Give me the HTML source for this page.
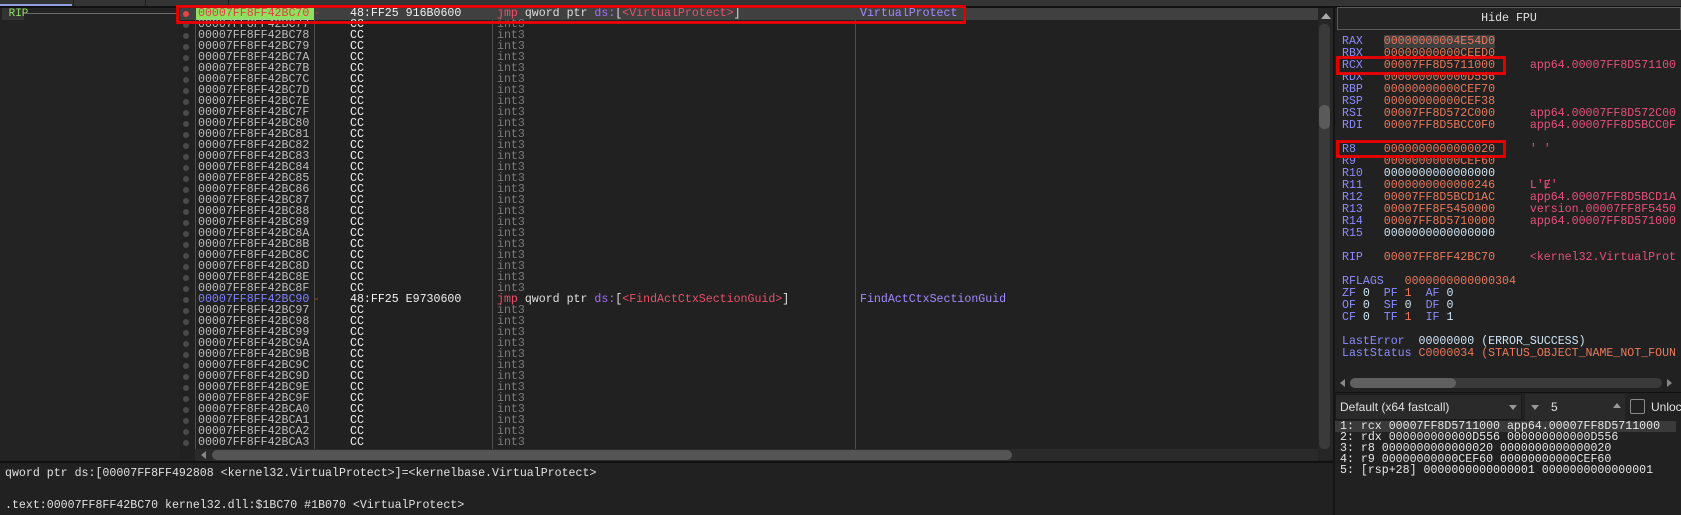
<!DOCTYPE html>
<html><head><meta charset="utf-8">
<style>
*{margin:0;padding:0;box-sizing:border-box}
body{width:1681px;height:515px;background:#212121;overflow:hidden;position:relative;font-family:"Liberation Mono",monospace;font-size:11.6px;color:#ddd}
.a{position:absolute;white-space:pre}
.r{position:absolute;left:0;width:1318px;height:11px;line-height:11px}
.r span{position:absolute;white-space:pre}
.dot{left:183px;top:3px;width:6px;height:6px;border-radius:3px;background:#4a4a4a}
.ad{left:198px;color:#bdbdbd}
.by{left:350px;color:#f0f0f0}
.ds{left:497px;color:#7a7a7a}
.vl{position:absolute;width:1px;background:#4e4e4e}
.rg{position:absolute;left:1342px;white-space:pre;line-height:12px;height:12px}
.n{color:#8c8cff}.v{color:#e9795c}.z{color:#cfe3f2}.c{color:#e8507c}
</style></head><body>
<!-- top tab bar -->
<div class="a" style="left:0;top:0;width:1681px;height:6px;background:#343434"></div>
<div class="a" style="left:0;top:4px;width:72px;height:2px;background:#8fa0e0"></div>
<div class="a" style="left:73px;top:0;width:1px;height:6px;background:#1a1a1a"></div>
<div class="a" style="left:145px;top:0;width:1px;height:6px;background:#1a1a1a"></div>
<div class="a" style="left:228px;top:0;width:1px;height:6px;background:#1a1a1a"></div>
<div class="a" style="left:0;top:6px;width:1681px;height:2px;background:#111"></div>
<!-- left label panel -->
<div class="a" style="left:0;top:8px;width:180px;height:452px;background:#232323"></div>
<div class="a" style="left:2px;top:8px;width:22px;height:12px;background:#343434;color:#8ee060;line-height:12px;font-size:11px"> RIP</div>
<div class="a" style="left:24px;top:13px;width:154px;height:1px;background:#6a6a6a"></div>
<!-- column separators -->
<div class="vl" style="left:195px;top:8px;height:447px"></div>
<div class="vl" style="left:314px;top:8px;height:447px"></div>
<div class="vl" style="left:492px;top:8px;height:447px"></div>
<div class="vl" style="left:855px;top:8px;height:447px"></div>
<!-- selected row -->
<div class="a" style="left:180px;top:8px;width:1138px;height:12px;background:#404040"></div>
<div class="a" style="left:196px;top:8px;width:118px;height:12px;background:#8ee060"></div>
<div id="rows"></div>
<div class="r" style="top:8px"><span class="dot" style="background:#e04848"></span><span class="ad" style="color:#e04040">00007FF8FF42BC70</span><span style="left:313px;color:#d03030">-</span><span class="by">48:FF25 916B0600</span><span style="left:497px"><span style="position:static;color:#e8506a">jmp</span> qword ptr <span style="position:static;color:#a070ff">ds:</span>[<span style="position:static;color:#e8506a">&lt;VirtualProtect&gt;</span>]</span><span style="left:860px;color:#a488ff">VirtualProtect</span></div>
<div class="r" style="top:19px"><span class="dot"></span><span class="ad">00007FF8FF42BC77</span><span class="by">CC</span><span class="ds">int3</span></div>
<div class="r" style="top:30px"><span class="dot"></span><span class="ad">00007FF8FF42BC78</span><span class="by">CC</span><span class="ds">int3</span></div>
<div class="r" style="top:41px"><span class="dot"></span><span class="ad">00007FF8FF42BC79</span><span class="by">CC</span><span class="ds">int3</span></div>
<div class="r" style="top:52px"><span class="dot"></span><span class="ad">00007FF8FF42BC7A</span><span class="by">CC</span><span class="ds">int3</span></div>
<div class="r" style="top:63px"><span class="dot"></span><span class="ad">00007FF8FF42BC7B</span><span class="by">CC</span><span class="ds">int3</span></div>
<div class="r" style="top:74px"><span class="dot"></span><span class="ad">00007FF8FF42BC7C</span><span class="by">CC</span><span class="ds">int3</span></div>
<div class="r" style="top:85px"><span class="dot"></span><span class="ad">00007FF8FF42BC7D</span><span class="by">CC</span><span class="ds">int3</span></div>
<div class="r" style="top:96px"><span class="dot"></span><span class="ad">00007FF8FF42BC7E</span><span class="by">CC</span><span class="ds">int3</span></div>
<div class="r" style="top:107px"><span class="dot"></span><span class="ad">00007FF8FF42BC7F</span><span class="by">CC</span><span class="ds">int3</span></div>
<div class="r" style="top:118px"><span class="dot"></span><span class="ad">00007FF8FF42BC80</span><span class="by">CC</span><span class="ds">int3</span></div>
<div class="r" style="top:129px"><span class="dot"></span><span class="ad">00007FF8FF42BC81</span><span class="by">CC</span><span class="ds">int3</span></div>
<div class="r" style="top:140px"><span class="dot"></span><span class="ad">00007FF8FF42BC82</span><span class="by">CC</span><span class="ds">int3</span></div>
<div class="r" style="top:151px"><span class="dot"></span><span class="ad">00007FF8FF42BC83</span><span class="by">CC</span><span class="ds">int3</span></div>
<div class="r" style="top:162px"><span class="dot"></span><span class="ad">00007FF8FF42BC84</span><span class="by">CC</span><span class="ds">int3</span></div>
<div class="r" style="top:173px"><span class="dot"></span><span class="ad">00007FF8FF42BC85</span><span class="by">CC</span><span class="ds">int3</span></div>
<div class="r" style="top:184px"><span class="dot"></span><span class="ad">00007FF8FF42BC86</span><span class="by">CC</span><span class="ds">int3</span></div>
<div class="r" style="top:195px"><span class="dot"></span><span class="ad">00007FF8FF42BC87</span><span class="by">CC</span><span class="ds">int3</span></div>
<div class="r" style="top:206px"><span class="dot"></span><span class="ad">00007FF8FF42BC88</span><span class="by">CC</span><span class="ds">int3</span></div>
<div class="r" style="top:217px"><span class="dot"></span><span class="ad">00007FF8FF42BC89</span><span class="by">CC</span><span class="ds">int3</span></div>
<div class="r" style="top:228px"><span class="dot"></span><span class="ad">00007FF8FF42BC8A</span><span class="by">CC</span><span class="ds">int3</span></div>
<div class="r" style="top:239px"><span class="dot"></span><span class="ad">00007FF8FF42BC8B</span><span class="by">CC</span><span class="ds">int3</span></div>
<div class="r" style="top:250px"><span class="dot"></span><span class="ad">00007FF8FF42BC8C</span><span class="by">CC</span><span class="ds">int3</span></div>
<div class="r" style="top:261px"><span class="dot"></span><span class="ad">00007FF8FF42BC8D</span><span class="by">CC</span><span class="ds">int3</span></div>
<div class="r" style="top:272px"><span class="dot"></span><span class="ad">00007FF8FF42BC8E</span><span class="by">CC</span><span class="ds">int3</span></div>
<div class="r" style="top:283px"><span class="dot"></span><span class="ad">00007FF8FF42BC8F</span><span class="by">CC</span><span class="ds">int3</span></div>
<div class="r" style="top:294px"><span class="dot"></span><span class="ad" style="color:#8080ff">00007FF8FF42BC90</span><span style="left:313px;color:#d03030">-</span><span class="by">48:FF25 E9730600</span><span style="left:497px;color:#e0e0e0"><span style="position:static;color:#e8506a">jmp</span> qword ptr <span style="position:static;color:#a070ff">ds:</span>[<span style="position:static;color:#e8506a">&lt;FindActCtxSectionGuid&gt;</span>]</span><span style="left:860px;color:#a488ff">FindActCtxSectionGuid</span></div>
<div class="r" style="top:305px"><span class="dot"></span><span class="ad">00007FF8FF42BC97</span><span class="by">CC</span><span class="ds">int3</span></div>
<div class="r" style="top:316px"><span class="dot"></span><span class="ad">00007FF8FF42BC98</span><span class="by">CC</span><span class="ds">int3</span></div>
<div class="r" style="top:327px"><span class="dot"></span><span class="ad">00007FF8FF42BC99</span><span class="by">CC</span><span class="ds">int3</span></div>
<div class="r" style="top:338px"><span class="dot"></span><span class="ad">00007FF8FF42BC9A</span><span class="by">CC</span><span class="ds">int3</span></div>
<div class="r" style="top:349px"><span class="dot"></span><span class="ad">00007FF8FF42BC9B</span><span class="by">CC</span><span class="ds">int3</span></div>
<div class="r" style="top:360px"><span class="dot"></span><span class="ad">00007FF8FF42BC9C</span><span class="by">CC</span><span class="ds">int3</span></div>
<div class="r" style="top:371px"><span class="dot"></span><span class="ad">00007FF8FF42BC9D</span><span class="by">CC</span><span class="ds">int3</span></div>
<div class="r" style="top:382px"><span class="dot"></span><span class="ad">00007FF8FF42BC9E</span><span class="by">CC</span><span class="ds">int3</span></div>
<div class="r" style="top:393px"><span class="dot"></span><span class="ad">00007FF8FF42BC9F</span><span class="by">CC</span><span class="ds">int3</span></div>
<div class="r" style="top:404px"><span class="dot"></span><span class="ad">00007FF8FF42BCA0</span><span class="by">CC</span><span class="ds">int3</span></div>
<div class="r" style="top:415px"><span class="dot"></span><span class="ad">00007FF8FF42BCA1</span><span class="by">CC</span><span class="ds">int3</span></div>
<div class="r" style="top:426px"><span class="dot"></span><span class="ad">00007FF8FF42BCA2</span><span class="by">CC</span><span class="ds">int3</span></div>
<div class="r" style="top:437px"><span class="dot"></span><span class="ad">00007FF8FF42BCA3</span><span class="by">CC</span><span class="ds">int3</span></div>
<!-- red box main -->
<div class="a" style="left:176px;top:5px;width:790px;height:19px;border:3px solid #e00000"></div>
<!-- horizontal scrollbar disasm -->
<div class="a" style="left:195px;top:449px;width:1123px;height:12px;background:#2a2a2a"></div>
<div class="a" style="left:201px;top:451px;width:0;height:0;border:4px solid transparent;border-right:5px solid #888;border-left:0"></div>
<div class="a" style="left:212px;top:450px;width:800px;height:10px;border-radius:5px;background:#555"></div>
<!-- vertical scrollbar -->
<div class="a" style="left:1318px;top:8px;width:15px;height:452px;background:#262626"></div>
<div class="a" style="left:1321px;top:13px;width:0;height:0;border:5px solid transparent;border-bottom:6px solid #aaa;border-top:0"></div>
<div class="a" style="left:1319px;top:24px;width:11px;height:425px;border-radius:5px;background:#3a3a3a"></div>
<div class="a" style="left:1319px;top:105px;width:11px;height:24px;border-radius:5px;background:#5a5a5a"></div>
<div class="a" style="left:1333px;top:6px;width:2px;height:509px;background:#141414"></div>
<!-- bottom info pane -->
<div class="a" style="left:0;top:461px;width:1333px;height:2px;background:#111"></div>
<div class="a" style="left:5px;top:468px;color:#e0e0e0;line-height:12px">qword ptr ds:[00007FF8FF492808 &lt;kernel32.VirtualProtect&gt;]=&lt;kernelbase.VirtualProtect&gt;</div>
<div class="a" style="left:5px;top:500px;color:#e0e0e0;line-height:12px">.text:00007FF8FF42BC70 kernel32.dll:$1BC70 #1B070 &lt;VirtualProtect&gt;</div>
<!-- register panel -->
<div class="a" style="left:1337px;top:7px;width:344px;height:23px;border:1px solid #5a5a5a;background:#252525;color:#e0e0e0;text-align:center;line-height:21px">Hide FPU</div>
<div class="rg" style="top:36px"><span class="n">RAX</span>   <span class="v" style="background:#3f3f3f">00000000004E54D0</span></div>
<div class="rg" style="top:48px"><span class="n">RBX</span>   <span class="v">00000000000CEED0</span></div>
<div class="rg" style="top:60px"><span class="n">RCX</span>   <span class="v">00007FF8D5711000</span>     <span class="c">app64.00007FF8D571100</span></div>
<div class="rg" style="top:72px"><span class="n">RDX</span>   <span class="v">000000000000D556</span></div>
<div class="rg" style="top:84px"><span class="n">RBP</span>   <span class="v">00000000000CEF70</span></div>
<div class="rg" style="top:96px"><span class="n">RSP</span>   <span class="v">00000000000CEF38</span></div>
<div class="rg" style="top:108px"><span class="n">RSI</span>   <span class="v">00007FF8D572C000</span>     <span class="c">app64.00007FF8D572C00</span></div>
<div class="rg" style="top:120px"><span class="n">RDI</span>   <span class="v">00007FF8D5BCC0F0</span>     <span class="c">app64.00007FF8D5BCC0F</span></div>
<div class="rg" style="top:144px"><span class="n">R8</span>    <span class="v">0000000000000020</span>     <span class="c">' '</span></div>
<div class="rg" style="top:156px"><span class="n">R9</span>    <span class="v">00000000000CEF60</span></div>
<div class="rg" style="top:168px"><span class="n">R10</span>   <span class="z">0000000000000000</span></div>
<div class="rg" style="top:180px"><span class="n">R11</span>   <span class="v">0000000000000246</span>     <span class="c">L'Ɇ'</span></div>
<div class="rg" style="top:192px"><span class="n">R12</span>   <span class="v">00007FF8D5BCD1AC</span>     <span class="c">app64.00007FF8D5BCD1A</span></div>
<div class="rg" style="top:204px"><span class="n">R13</span>   <span class="v">00007FF8F5450000</span>     <span class="c">version.00007FF8F5450</span></div>
<div class="rg" style="top:216px"><span class="n">R14</span>   <span class="v">00007FF8D5710000</span>     <span class="c">app64.00007FF8D571000</span></div>
<div class="rg" style="top:228px"><span class="n">R15</span>   <span class="z">0000000000000000</span></div>
<div class="rg" style="top:252px"><span class="n">RIP</span>   <span class="v">00007FF8FF42BC70</span>     <span class="c">&lt;kernel32.VirtualProt</span></div>
<div class="rg" style="top:276px"><span class="n">RFLAGS</span>   <span class="v">0000000000000304</span></div>
<div class="rg" style="top:288px"><span class="n">ZF</span> <span class="z">0</span>  <span class="n">PF</span> <span class="v">1</span>  <span class="n">AF</span> <span class="z">0</span></div>
<div class="rg" style="top:300px"><span class="n">OF</span> <span class="z">0</span>  <span class="n">SF</span> <span class="z">0</span>  <span class="n">DF</span> <span class="z">0</span></div>
<div class="rg" style="top:312px"><span class="n">CF</span> <span class="z">0</span>  <span class="n">TF</span> <span class="v">1</span>  <span class="n">IF</span> <span class="z">1</span></div>
<div class="rg" style="top:336px"><span class="n">LastError</span>  <span class="z">00000000</span> <span class="z">(ERROR_SUCCESS)</span></div>
<div class="rg" style="top:348px"><span class="n">LastStatus</span> <span class="v">C0000034</span> <span class="v">(STATUS_OBJECT_NAME_NOT_FOUN</span></div>
<!-- reg boxes -->
<div class="a" style="left:1336px;top:56px;width:170px;height:19px;border:3px solid #e00000"></div>
<div class="a" style="left:1336px;top:140px;width:170px;height:18px;border:3px solid #e00000"></div>
<!-- reg horizontal scroll -->
<div class="a" style="left:1340px;top:379px;width:0;height:0;border:4px solid transparent;border-right:5px solid #888;border-left:0"></div>
<div class="a" style="left:1350px;top:378px;width:312px;height:10px;border-radius:5px;background:#3a3a3a"></div>
<div class="a" style="left:1350px;top:378px;width:106px;height:10px;border-radius:5px;background:#606060"></div>
<div class="a" style="left:1667px;top:379px;width:0;height:0;border:4px solid transparent;border-left:5px solid #888;border-right:0"></div>
<div class="a" style="left:1335px;top:392px;width:346px;height:1px;background:#111"></div>
<!-- args toolbar -->
<div class="a" style="left:1335px;top:394px;width:187px;height:26px;background:#2a2a2a;border:1px solid #1a1a1a;font-family:'Liberation Sans',sans-serif;font-size:12px;color:#e0e0e0;line-height:24px;padding-left:4px">Default (x64 fastcall)</div>
<div class="a" style="left:1509px;top:405px;width:0;height:0;border:4px solid transparent;border-top:5px solid #999;border-bottom:0"></div>
<div class="a" style="left:1525px;top:394px;width:100px;height:26px;background:#2a2a2a;font-family:'Liberation Sans',sans-serif;font-size:12px;color:#e0e0e0;line-height:26px;padding-left:26px">5</div>
<div class="a" style="left:1531px;top:405px;width:0;height:0;border:4px solid transparent;border-top:5px solid #999;border-bottom:0"></div>
<div class="a" style="left:1613px;top:403px;width:0;height:0;border:4px solid transparent;border-bottom:5px solid #999;border-top:0"></div>
<div class="a" style="left:1630px;top:399px;width:15px;height:15px;border:1px solid #888;border-radius:2px"></div>
<div class="a" style="left:1651px;top:400px;font-family:'Liberation Sans',sans-serif;font-size:12px;color:#e0e0e0">Unlock</div>
<div class="a" style="left:1335px;top:421px;width:341px;height:11px;background:#3a3a3a"></div>
<div class="a" style="left:1340px;top:421px;line-height:11px;color:#e6e6e6">1: rcx 00007FF8D5711000 app64.00007FF8D5711000</div>
<div class="a" style="left:1340px;top:432px;line-height:11px;color:#e6e6e6">2: rdx 000000000000D556 000000000000D556</div>
<div class="a" style="left:1340px;top:443px;line-height:11px;color:#e6e6e6">3: r8 0000000000000020 0000000000000020</div>
<div class="a" style="left:1340px;top:454px;line-height:11px;color:#e6e6e6">4: r9 00000000000CEF60 00000000000CEF60</div>
<div class="a" style="left:1340px;top:465px;line-height:11px;color:#e6e6e6">5: [rsp+28] 0000000000000001 0000000000000001</div>
</body></html>
